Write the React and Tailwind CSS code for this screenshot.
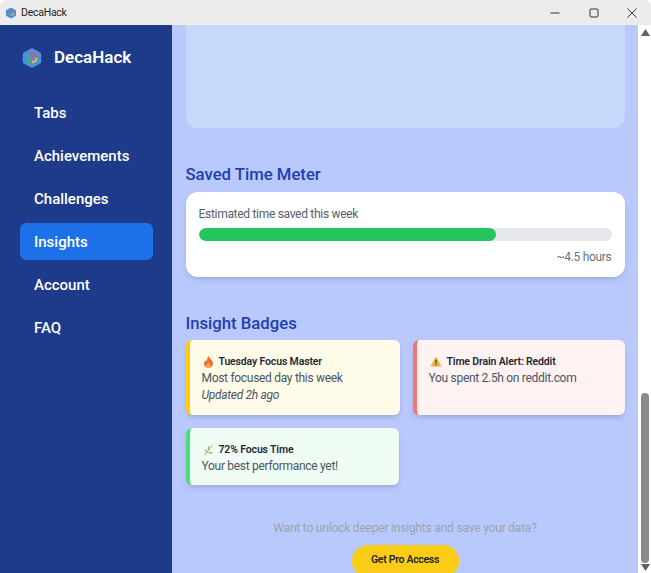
import React from 'react';

const font = "font-['Roboto',sans-serif]";

const navItems = ['Tabs', 'Achievements', 'Challenges', 'Insights', 'Account', 'FAQ'];

const Logo = ({ size }) => (
  <svg width={size} height={size} viewBox="0 0 24 24" fill="none">
    <path d="M12 1 L22 6.5 V17.5 L12 23 L2 17.5 V6.5 Z" fill="#4a90e2" />
    <path d="M8.5 7.5 H12 C14.6 7.5 16.6 9.3 16.8 11.8" stroke="#e5554f" strokeWidth="2.2" />
    <path d="M16.8 11.8 C16.8 14.6 14.8 16.5 12 16.5" stroke="#f5b82e" strokeWidth="2.2" />
    <path d="M12 16.5 H8.5 V7.5" stroke="#45b264" strokeWidth="2.2" />
  </svg>
);

const Fire = () => (
  <svg width="11" height="12" viewBox="0 0 12 13">
    <path d="M6 0 C6.5 2.5 10.8 4.2 10.8 8.2 C10.8 11 8.6 13 6 13 C3.4 13 1.2 11 1.2 8.2 C1.2 6.4 2.2 5 3.2 4.2 C3.4 5.2 3.8 5.8 4.4 6 C4.2 3.8 4.8 1.6 6 0 Z" fill="#f1682a" />
    <path d="M6 6.5 C6.6 8 8.3 8.7 8.3 10.4 C8.3 11.8 7.2 13 6 13 C4.8 13 3.7 11.8 3.7 10.4 C3.7 8.8 5.4 8.2 6 6.5 Z" fill="#fbb13c" />
  </svg>
);

const Warning = () => (
  <svg width="12" height="11" viewBox="0 0 12 11">
    <path d="M6 0.5 L11.7 10.5 H0.3 Z" fill="#f4b13d" />
    <rect x="5.4" y="3.6" width="1.2" height="3.8" fill="#4a3a20" />
    <rect x="5.4" y="8.2" width="1.2" height="1.2" fill="#4a3a20" />
  </svg>
);

const Herb = () => (
  <svg width="11" height="12" viewBox="0 0 12 13" fill="none">
    <path d="M2 12.5 C4 9 6.5 6 10 1.5" stroke="#8fae5c" strokeWidth="1" />
    <path d="M6 7.5 C5 5.5 5 3.5 5.5 1.5 C7 3 7.3 5 6.6 7 Z" fill="#9dbb6b" />
    <path d="M4 9.5 C2.8 8.6 1.6 7 1.2 5.2 C3 5.6 4.4 7 4.8 8.6 Z" fill="#a9c47a" />
    <path d="M6 9 C7.6 8.4 9.6 8.4 11 9.2 C9.6 10.4 7.6 10.4 5.6 9.8 Z" fill="#8fae5c" />
  </svg>
);

const Badge = ({ icon, title, border, bg, children, className }) => (
  <div className={`border-l-4 ${border} ${bg} ${className} rounded-md shadow-md pl-[12px] pt-[14px]`}>
    <div className="flex items-center gap-[5px] pl-[1px] text-[10.5px] leading-[15px] tracking-[-0.15px] font-semibold text-[#1f2937]">
      {icon}
      <span>{title}</span>
    </div>
    <div className="mt-[1px] text-[12px] leading-[16.5px] tracking-[-0.3px] text-[#4b5563]">{children}</div>
  </div>
);

export default function App() {
  return (
    <div className={`${font} h-[573px] w-[651px] overflow-hidden flex flex-col bg-[#e9e9e9] rounded-t-lg`}>
      <div className="h-[25px] shrink-0 flex items-center pl-[5px] pt-[1px] bg-[#ececec] text-[10.5px] tracking-[-0.25px] text-[#1f1f1f]">
        <Logo size={12} />
        <span className="ml-[4px]">DecaHack</span>
        <div className="ml-auto flex items-center text-[#333]">
          <svg width="10" height="10" viewBox="0 0 10 10" className="mr-[29px]"><path d="M0.5 5 H9.5" stroke="currentColor" /></svg>
          <svg width="10" height="10" viewBox="0 0 10 10" className="mr-[28px]"><rect x="1" y="1" width="8" height="8" rx="1" fill="none" stroke="currentColor" /></svg>
          <svg width="10" height="10" viewBox="0 0 10 10" className="mr-[14px]"><path d="M0.5 0.5 L9.5 9.5 M9.5 0.5 L0.5 9.5" stroke="currentColor" /></svg>
        </div>
      </div>

      <div className="flex flex-1 min-h-0">
        <aside className="w-[172px] shrink-0 bg-[#1e3a8a] text-white">
          <div className="flex items-center gap-[11px] pl-[21px] h-[65px]">
            <Logo size={22} />
            <span className="text-[17px] font-semibold">DecaHack</span>
          </div>
          <nav className="mt-[4px] ml-[20px] w-[133px] flex flex-col gap-[6px]">
            {navItems.map((item) => (
              <div
                key={item}
                className={`h-[37px] pl-[14px] pt-[1px] flex items-center text-[15px] font-medium rounded-md ${item === 'Insights' ? 'bg-[#1c70e8]' : ''}`}
              >
                {item}
              </div>
            ))}
          </nav>
        </aside>

        <main className="flex-1 min-w-0 bg-[#b9c9fd] px-[13.5px] overflow-hidden">
          <div className="h-[103px] bg-[#c7d8fa] rounded-b-xl" />

          <h2 className="mt-[36px] text-[16.7px] leading-[22px] font-medium text-[#1e40af]">Saved Time Meter</h2>
          <div className="mt-[6px] h-[85px] bg-white rounded-xl shadow-md px-[13px] pt-[13px]">
            <div className="text-[12px] leading-[18px] tracking-[-0.3px] text-[#555e6c]">Estimated time saved this week</div>
            <div className="mt-[5px] h-[13px] rounded-full bg-[#e5e7eb] overflow-hidden">
              <div className="h-full w-[72%] rounded-full bg-[#22c55e]" />
            </div>
            <div className="mt-[7px] text-right text-[12px] leading-[18px] tracking-[-0.3px] text-[#6b7280]">~4.5 hours</div>
          </div>

          <h2 className="mt-[36px] text-[16.7px] leading-[22px] font-medium text-[#1e40af]">Insight Badges</h2>
          <div className="mt-[5px] grid grid-cols-[214px_212px] gap-[13px]">
            <Badge icon={<Fire />} title="Tuesday Focus Master" border="border-[#facc15]" bg="bg-[#fefce8]" className="h-[75px]">
              <div>Most focused day this week</div>
              <div className="italic">Updated 2h ago</div>
            </Badge>
            <Badge icon={<Warning />} title="Time Drain Alert: Reddit" border="border-[#f87171]" bg="bg-[#fef2f2]" className="h-[75px]">
              You spent 2.5h on reddit.com
            </Badge>
            <Badge icon={<Herb />} title="72% Focus Time" border="border-[#4ade80]" bg="bg-[#f0fdf4]" className="h-[57px] w-[213px]">
              Your best performance yet!
            </Badge>
          </div>

          <p className="mt-[34px] text-center text-[12px] leading-[18px] tracking-[-0.2px] text-[#9ca3af]">Want to unlock deeper insights and save your data?</p>
          <div className="mt-[8px] flex justify-center">
            <button className="w-[107px] h-[32px] shrink-0 rounded-full bg-[#facc15] pb-[2px] text-[#1f2937] text-[10.5px] tracking-[-0.3px] font-semibold">Get Pro Access</button>
          </div>
        </main>

        <div className="w-[13px] shrink-0 bg-white flex flex-col items-center justify-between pl-[1px]">
          <svg width="9" height="7" viewBox="0 0 9 7" className="mt-[4px]"><path d="M4.5 0 L9 7 H0 Z" fill="#606060" /></svg>
          <div className="mt-auto w-[8px] h-[170px] rounded-full bg-[#8a8a8a]" />
          <svg width="9" height="7" viewBox="0 0 9 7" className="mt-[1px] mb-[2px]"><path d="M0 0 H9 L4.5 7 Z" fill="#606060" /></svg>
        </div>
      </div>
    </div>
  );
}
